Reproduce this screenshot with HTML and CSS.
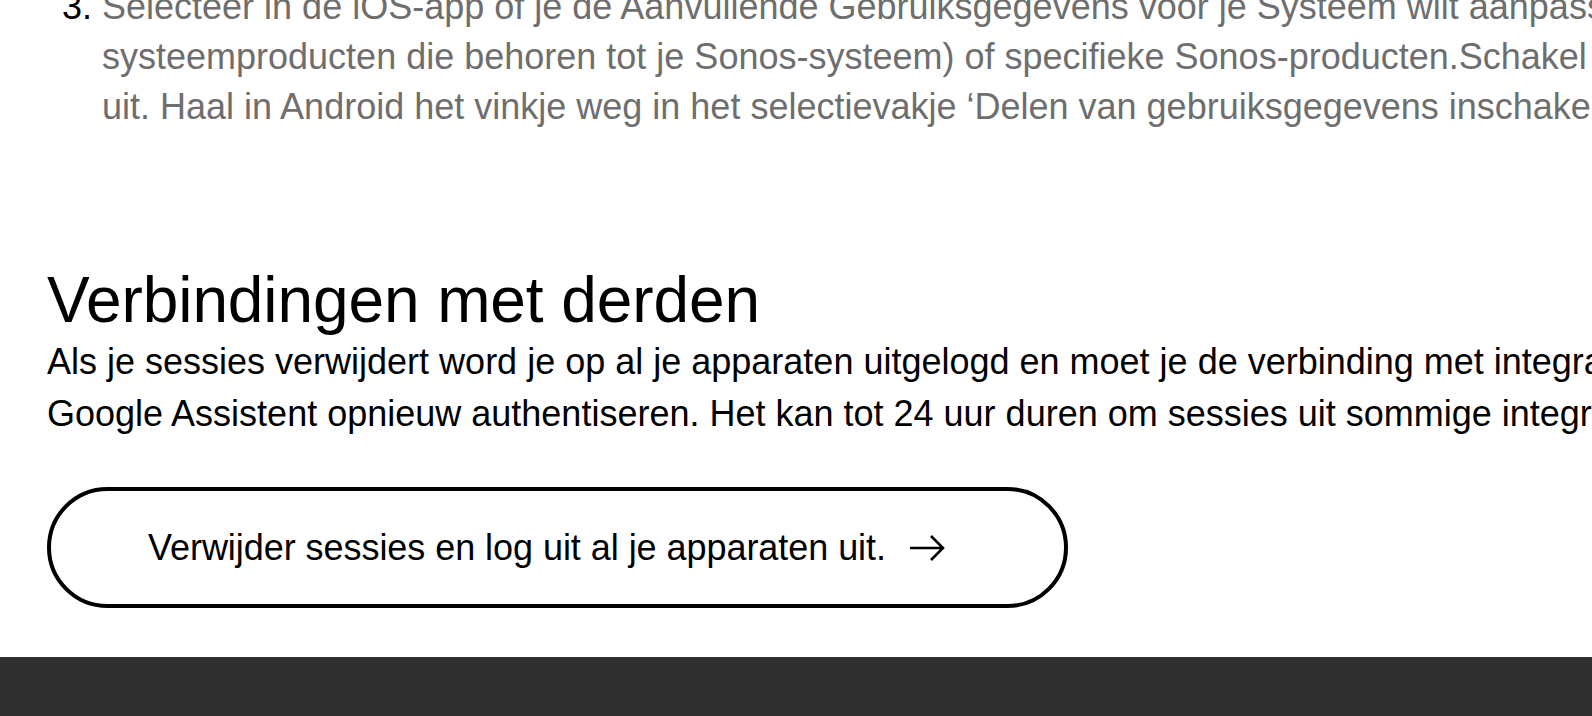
FILE: index.html
```html
<!DOCTYPE html>
<html lang="nl">
<head>
<meta charset="utf-8">
<title>Privacy</title>
<link rel="stylesheet" href="styles.css">
</head>
<body>
<main class="page">
  <ol class="steps" start="3">
    <li>Selecteer in de iOS-app of je de Aanvullende Gebruiksgegevens voor je Systeem wilt aanpassen (alle<br>systeemproducten die behoren tot je Sonos-systeem) of specifieke Sonos-producten.Schakel Aanvullende Gebruiksgegevens<br>uit. Haal in Android het vinkje weg in het selectievakje ‘Delen van gebruiksgegevens inschakelen’.</li>
  </ol>
  <section class="connections">
    <h2 class="connections-title">Verbindingen met derden</h2>
    <p class="connections-text">Als je sessies verwijdert word je op al je apparaten uitgelogd en moet je de verbinding met integraties zoals Amazon Alexa en<br>Google Assistent opnieuw authentiseren. Het kan tot 24 uur duren om sessies uit sommige integraties te verwijderen.</p>
    <button class="btn-outline" type="button">
      <span>Verwijder sessies en log uit al je apparaten uit.</span>
      <svg class="btn-arrow" viewBox="0 0 35 28" width="35" height="28" aria-hidden="true">
        <path d="M0 14 H33 M21 2 L33 14 L21 26" fill="none" stroke="#000" stroke-width="2.6" stroke-linecap="butt" stroke-linejoin="miter"/>
      </svg>
    </button>
  </section>
</main>
<footer class="site-footer"></footer>
</body>
</html>
```

FILE: styles.css
```css
html, body {
  margin: 0;
  padding: 0;
  overflow: hidden;
  background: #fff;
}

body {
  font-family: "Liberation Sans", Arial, Helvetica, sans-serif;
  color: #000;
  width: 1592px;
  height: 716px;
}

.page {
  padding: 0 0 0 47px;
  white-space: nowrap;
}

.steps {
  margin: -18px 0 0 0;
  padding: 0 0 0 55px;
  font-size: 36px;
  line-height: 50px;
  color: #6e6e6e;
}

.steps li::marker {
  color: #000;
}

.connections {
  margin-top: 132px;
}

.connections-title {
  margin: 0;
  font-size: 64px;
  line-height: 72px;
  font-weight: 400;
  color: #000;
  letter-spacing: -0.1px;
}

.connections-text {
  margin: 0;
  font-size: 36px;
  line-height: 52px;
  color: #000;
}

.btn-outline {
  margin-top: 47px;
  box-sizing: border-box;
  height: 121px;
  width: 1021px;
  display: flex;
  align-items: center;
  gap: 24px;
  padding: 0 0 0 97px;
  border: 4px solid #000;
  border-radius: 61px;
  background: #fff;
  font-family: "Liberation Sans", Arial, Helvetica, sans-serif;
  font-size: 36px;
  color: #000;
  cursor: pointer;
  letter-spacing: -0.05px;
}

.btn-arrow {
  display: block;
  flex: none;
}

.site-footer {
  margin-top: 49px;
  height: 300px;
  background: #303030;
}
```
